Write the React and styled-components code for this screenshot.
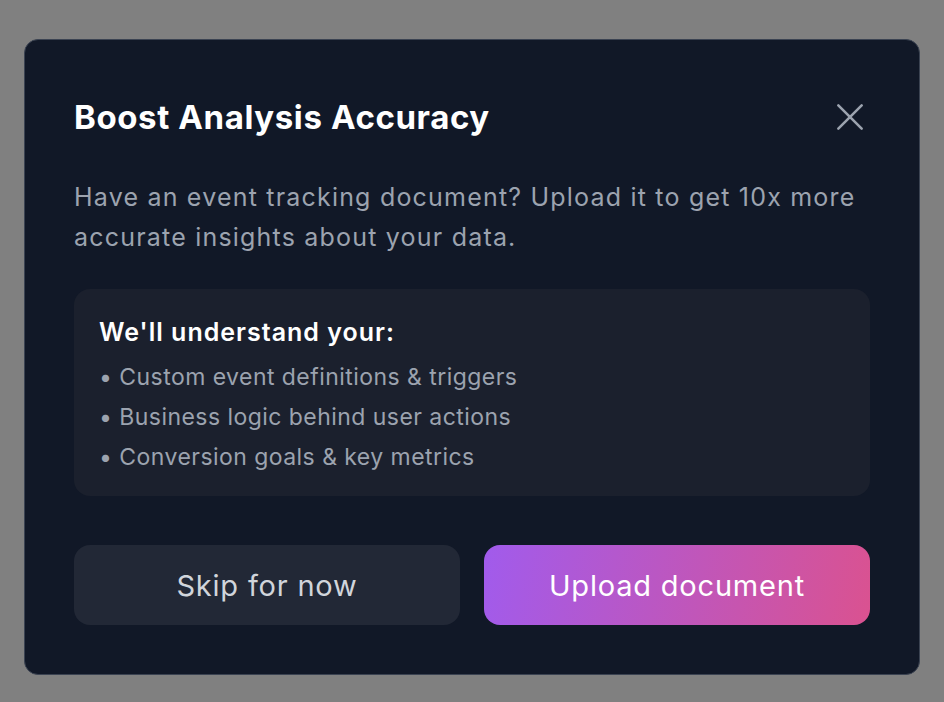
import React from "react";
import styled, { createGlobalStyle } from "styled-components";

const GlobalStyle = createGlobalStyle`
	* {
		box-sizing: border-box;
	}

	body {
		margin: 0;
		background: #808080;
		font-family: Inter, "Noto Sans", sans-serif;
		-webkit-font-smoothing: antialiased;
	}
`;

const Page = styled.div`
	display: flex;
	align-items: flex-start;
	justify-content: center;
	padding-top: 39px;
	min-height: 702px;
`;

const Modal = styled.div`
	width: 896px;
	background: #111827;
	border: 1px solid #3b4352;
	border-radius: 14px;
	padding: 49px;
	display: flex;
	flex-direction: column;
`;

const Header = styled.div`
	display: flex;
	align-items: center;
	justify-content: space-between;
	height: 56px;
`;

const Title = styled.h2`
	margin: 0;
	color: #ffffff;
	font-size: 33px;
	font-weight: 700;
	letter-spacing: 0.6px;
`;

const CloseButton = styled.button`
	display: flex;
	align-items: center;
	justify-content: center;
	width: 40px;
	height: 40px;
	padding: 0;
	border: none;
	background: transparent;
	color: #9ca3af;
	cursor: pointer;
`;

const Description = styled.p`
	margin: 32px 0 0;
	color: #9ca3af;
	font-size: 25px;
	line-height: 40px;
	letter-spacing: 1.2px;
`;

const InfoBox = styled.div`
	margin-top: 32px;
	background: #1b202d;
	border-radius: 16px;
	padding: 24px 25px 19px;
`;

const InfoTitle = styled.h3`
	margin: 0 0 6px;
	color: #ffffff;
	font-size: 25px;
	font-weight: 600;
	line-height: 38px;
	letter-spacing: 1px;
`;

const List = styled.ul`
	margin: 0;
	padding: 0;
	list-style: none;
`;

const Item = styled.li`
	color: #9ca3af;
	font-size: 23px;
	line-height: 40px;
	letter-spacing: 0.45px;
`;

const Actions = styled.div`
	display: grid;
	grid-template-columns: 1fr 1fr;
	gap: 24px;
	margin-top: 49px;
`;

const Button = styled.button`
	height: 80px;
	border: none;
	border-radius: 16px;
	font-family: inherit;
	font-size: 29px;
	font-weight: 400;
	letter-spacing: 0.8px;
	cursor: pointer;
	color: ${({ primary }) => (primary ? "#ffffff" : "#d1d5db")};
	background: ${({ primary }) =>
		primary ? "linear-gradient(100deg, #a15bec 0%, #da5290 100%)" : "#222836"};
`;

const items = [
	"Custom event definitions & triggers",
	"Business logic behind user actions",
	"Conversion goals & key metrics",
];

const App = () => {
	return (
		<>
			<GlobalStyle />
			<Page>
				<Modal>
					<Header>
						<Title>Boost Analysis Accuracy</Title>
						<CloseButton aria-label="Close">
							<svg width="28" height="28" viewBox="0 0 24 24" fill="none" stroke="currentColor" strokeWidth="2.2" strokeLinecap="round">
								<path d="M2 2l20 20M22 2L2 22" />
							</svg>
						</CloseButton>
					</Header>
					<Description>
						Have an event tracking document? Upload it to get 10x more accurate insights about your data.
					</Description>
					<InfoBox>
						<InfoTitle>We'll understand your:</InfoTitle>
						<List>
							{items.map((item) => (
								<Item key={item}>• {item}</Item>
							))}
						</List>
					</InfoBox>
					<Actions>
						<Button>Skip for now</Button>
						<Button primary>Upload document</Button>
					</Actions>
				</Modal>
			</Page>
		</>
	);
};

export default App;
